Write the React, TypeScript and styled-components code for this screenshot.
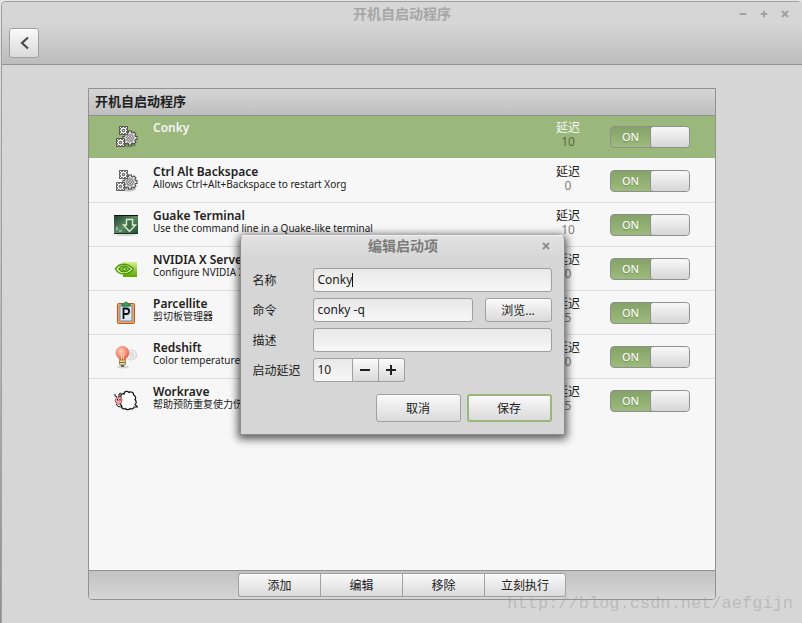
import React from "react";
import styled, { createGlobalStyle, css } from "styled-components";

const Global = createGlobalStyle`
  *, *::before, *::after { box-sizing: border-box; }
  body {
    margin: 0;
    background: linear-gradient(to bottom, #e4e4e4, #8a8f96);
    color: #212121;
    font: 12px "Noto Sans", "Noto Sans CJK SC", sans-serif;
  }
  button, input { font: inherit; color: inherit; }
`;

const Window = styled.div`
  position: relative;
  display: flex;
  flex-direction: column;
  min-height: calc(100vh - 1px);
  margin: 1px 0 0 1px;
  border: solid #9fa1a0;
  border-width: 1px 0 0 1px;
  border-radius: 5px 5px 0 0;
  background: #d6d6d6;
`;

const Header = styled.header`
  height: 63px;
  border-bottom: 1px solid #919191;
  border-radius: 4px 4px 0 0;
  background: linear-gradient(to bottom, #d6d6d6 22px, #bcbcbc);
`;

const TitleBar = styled.div`
  display: grid;
  grid-template-columns: 1fr auto 1fr;
  align-items: center;
  height: 24px;
  padding: 0 9px;
`;

const WindowTitle = styled.h1`
  grid-column: 2;
  margin: 0;
  font-size: 14px;
  line-height: 22px;
  font-weight: 700;
  color: #a6a6a6;
`;

const WindowControls = styled.div`
  display: flex;
  justify-content: flex-end;
  gap: 5px;
`;

const GlyphButton = styled.button`
  display: grid;
  place-items: center;
  width: 16px;
  height: 20px;
  padding: 0;
  border: 0;
  background: none;
  color: #a2a2a2;
`;

const raised = css`
  border: 1px solid #a0a0a0;
  border-radius: 3px;
  background: linear-gradient(to bottom, #fafafa, #dadada);
  box-shadow: inset 0 1px 0 #fff;
`;

const BackButton = styled.button`
  ${raised}
  display: grid;
  place-items: center;
  width: 30px;
  height: 30px;
  margin: 2px 0 0 7px;
  padding: 0;
  color: #4a4a4a;
`;

const Content = styled.main`
  display: flex;
  flex: 1;
  flex-direction: column;
  padding: 23px 86px 23px;
`;

const Panel = styled.section`
  display: flex;
  flex: 1;
  flex-direction: column;
  border: 1px solid #919191;
  border-radius: 0 0 4px 4px;
  background: #f7f7f7;
`;

const PanelTitle = styled.h2`
  height: 26px;
  margin: 0;
  padding: 0 6px;
  background: linear-gradient(to bottom, #d6d6d6, #bebebe);
  font-size: 13px;
  line-height: 25px;
  font-weight: 700;
`;

const List = styled.ul`
  flex: 1;
  margin: 0;
  padding: 0;
  list-style: none;
`;

const Row = styled.li<{ $selected?: boolean }>`
  display: grid;
  grid-template-columns: 24px 1fr 40px 102px;
  height: 44px;
  padding: 0 25px;
  border-bottom: 1px solid ${(p) => (p.$selected ? "#f7f7f7" : "#dedede")};
  background: ${(p) => (p.$selected ? "#9bb87c" : "#f7f7f7")};
  color: ${(p) => (p.$selected ? "#f5f5f5" : "#212121")};
  box-shadow: ${(p) => (p.$selected ? "inset 0 1px 0 #919191" : "none")};
  &:last-child { border-bottom: 0; }
`;

const IconCell = styled.span`
  display: grid;
  align-items: center;
`;

const TextCell = styled.div`
  padding: 6px 0 0 15px;
  white-space: nowrap;
`;

const Name = styled.div`
  font-size: 12px;
  line-height: 14px;
  font-weight: 600;
`;

const Description = styled.div`
  font-size: 10px;
  line-height: 11px;
`;

const Delay = styled.div`
  padding-top: 6px;
  line-height: 14px;
  text-align: center;
`;

const DelayValue = styled.div<{ $selected?: boolean }>`
  color: ${(p) => (p.$selected ? "#56693f" : "#7d7d7d")};
`;

const Switch = styled.label`
  display: flex;
  align-self: center;
  justify-self: end;
  width: 80px;
  height: 22px;
  border: 1px solid #8f8f8f;
  border-radius: 4px;
  background: linear-gradient(to bottom, #85a366, #9dbb7d);
`;

const SwitchInput = styled.input`
  position: absolute;
  opacity: 0;
  pointer-events: none;
`;

const SwitchText = styled.span`
  flex: 1;
  color: #f7f7f7;
  font-size: 11px;
  font-weight: 500;
  line-height: 19px;
  text-align: center;
  text-shadow: 0 1px 1px #6f8b53;
`;

const Knob = styled.span`
  width: 39px;
  border-left: 1px solid #8f8f8f;
  border-radius: 3px;
  background: linear-gradient(to bottom, #f8f8f8, #d6d6d6);
`;

const PanelFooter = styled.footer`
  display: flex;
  justify-content: center;
  height: 29px;
  padding: 2px 0;
  border-top: 1px solid #919191;
  border-radius: 0 0 3px 3px;
  background: linear-gradient(to bottom, #c2c2c2, #d6d6d6);
`;

const FooterButton = styled.button`
  ${raised}
  width: 82px;
  padding: 0;
  border-right-width: 0;
  border-radius: 0;
  &:first-child { border-radius: 3px 0 0 3px; }
  &:last-child { border-right-width: 1px; border-radius: 0 3px 3px 0; }
`;

const Overlay = styled.div`
  position: absolute;
  inset: 0;
  display: grid;
  place-items: center;
  padding-top: 44px;
`;

const Dialog = styled.form`
  width: 325px;
  padding: 0 12px 12px;
  border: 1px solid #8c8c8c;
  border-top-color: #f2f2f2;
  border-radius: 5px 5px 0 0;
  background: linear-gradient(to bottom, #e2e2e2, #d6d6d6 24px);
  box-shadow: 0 2px 9px 2px rgba(0, 0, 0, 0.65);
`;

const DialogBar = styled.div`
  display: grid;
  grid-template-columns: 1fr auto 1fr;
  align-items: center;
  height: 20px;
  margin-right: -2px;
  margin-bottom: 12px;
`;

const DialogTitle = styled.h2`
  grid-column: 2;
  margin: 0;
  font-size: 14px;
  line-height: 20px;
  font-weight: 700;
  color: #7a7a7a;
`;

const DialogClose = styled(GlyphButton)`
  justify-self: end;
  color: #919191;
`;

const Fields = styled.div`
  display: grid;
  grid-template-columns: 60px minmax(0, 1fr);
  row-gap: 6px;
  align-items: center;
`;

const FieldLine = styled.div<{ $gap?: number }>`
  display: flex;
  gap: ${(p) => p.$gap ?? 0}px;
`;

const TextInput = styled.input`
  flex: 1;
  min-width: 0;
  height: 24px;
  padding: 0 4px;
  border: 1px solid #a0a0a0;
  border-radius: 3px;
  outline: 0;
  background: linear-gradient(to bottom, #e8e8e8, #f7f7f7);
`;

const ActiveInput = styled(TextInput)`
  caret-color: transparent;
  background:
    linear-gradient(#111, #111) 38px 4px / 1px 14px no-repeat,
    linear-gradient(to bottom, #e8e8e8, #f7f7f7);
`;

const SpinInput = styled(TextInput)`
  flex: 0 0 40px;
  border-radius: 3px 0 0 3px;
`;

const SpinButton = styled.button`
  ${raised}
  display: grid;
  place-items: center;
  width: 26px;
  height: 24px;
  padding: 0;
  border-left: 0;
  border-radius: 0;
  &:last-child { border-radius: 0 3px 3px 0; }
`;

const BrowseButton = styled.button`
  ${raised}
  width: 67px;
  height: 24px;
  padding: 0;
`;

const Actions = styled.div`
  display: flex;
  justify-content: flex-end;
  gap: 6px;
  margin-top: 12px;
`;

const ActionButton = styled.button<{ $primary?: boolean }>`
  ${raised}
  width: 85px;
  height: 28px;
  padding: 0;
  ${(p) => p.$primary && css`border: 2px solid #9bb87c;`}
`;

const Watermark = styled.div`
  position: absolute;
  right: 9px;
  bottom: 9px;
  color: rgba(150, 150, 150, 0.45);
  font: 17px/20px "Liberation Mono", monospace;
  pointer-events: none;
`;

const Cross = () => (
  <svg width="8" height="8" viewBox="0 0 8 8" stroke="currentColor" strokeWidth="2">
    <path d="M1 1L7 7M7 1L1 7" />
  </svg>
);

const Plus = ({ size, weight = 2 }: { size: number; weight?: number }) => (
  <svg width={size} height={size} viewBox="0 0 12 12" stroke="currentColor" strokeWidth={weight}>
    <path d="M1 6H11M6 1V11" />
  </svg>
);

const Minus = ({ size, weight = 2 }: { size: number; weight?: number }) => (
  <svg width={size} height={size} viewBox="0 0 12 12" stroke="currentColor" strokeWidth={weight}>
    <path d="M1 6H11" />
  </svg>
);

const SmallCog = ({ x, y }: { x: number; y: number }) => (
  <g transform={`translate(${x} ${y})`}>
    <path
      d="M0.500 0.500H2.500V1.500H3.500V0.500H5.500V1.500H6.500V0.500H8.500V2.500H7.500V3.500H8.500V5.500H7.500V6.500H8.500V8.500H6.500V7.500H5.500V8.500H3.500V7.500H2.500V8.500H0.500V6.500H1.500V5.500H0.500V3.500H1.500V2.500H0.500Z"
      fill="#fff"
      stroke="#3c3c3c"
      strokeWidth=".9"
    />
    <circle cx="4.500" cy="4.500" r="1.300" fill="#bbb" stroke="#333" strokeWidth=".8" />
  </g>
);

const Gears = () => (
  <svg width="24" height="24" viewBox="0 0 24 24" fill="none">
    <ellipse cx="14" cy="20" rx="8" ry="2.500" fill="#000" opacity=".22" />
    <g stroke="#3c3c3c" strokeWidth="4">
      {[0, 45, 90, 135].map((a) => (
        <path key={a} d="M16 5.500V20.500" transform={`rotate(${a} 16 13)`} />
      ))}
    </g>
    <circle cx="16" cy="13" r="5.600" fill="#d5d5d5" stroke="#4a4a4a" />
    <g stroke="#dedede" strokeWidth="2.200">
      {[0, 45, 90, 135].map((a) => (
        <path key={a} d="M16 6.400V19.600" transform={`rotate(${a} 16 13)`} />
      ))}
    </g>
    <circle cx="16" cy="13" r="4.600" fill="#d0d0d0" />
    <circle cx="16" cy="13" r="3.300" fill="#e4e4e4" stroke="#6d6d6d" />
    <circle cx="16" cy="13" r="1.400" fill="#fff" stroke="#444" strokeWidth=".8" />
    <SmallCog x={5} y={1} />
    <SmallCog x={2} y={13} />
  </svg>
);

const Guake = () => (
  <svg width="24" height="24" viewBox="0 0 24 24">
    <defs>
      <linearGradient id="guake" x1="0" y1="0" x2="1" y2="1">
        <stop offset="0" stopColor="#1d3b2a" />
        <stop offset=".5" stopColor="#5a8a66" />
        <stop offset="1" stopColor="#1f4a31" />
      </linearGradient>
    </defs>
    <ellipse cx="12" cy="22" rx="10" ry="1" fill="#000" opacity=".15" />
    <rect y="2" width="24" height="19" fill="url(#guake)" />
    <path d="M0 2.500H24" stroke="#111" />
    <path d="M0 20.500H24" stroke="#16301f" />
    <path d="M12.500 6.500H18.500V12H21.500L15.500 18.500L9.500 12H12.500Z" fill="#3e6b49" stroke="#d9ecc6" strokeWidth="1.400" />
    <path d="M2 14L4 15.500L2 17M5 18H8" stroke="#cfe2c4" fill="none" />
  </svg>
);

const Nvidia = () => (
  <svg width="24" height="24" viewBox="0 0 24 24">
    <defs>
      <linearGradient id="nvidia" x1="0" y1="0" x2="0" y2="1">
        <stop offset="0" stopColor="#d5f08c" />
        <stop offset="1" stopColor="#5aa800" />
      </linearGradient>
    </defs>
    <rect x="9" y="5" width="14" height="15" fill="url(#nvidia)" />
    <g fill="none" stroke="#4f9a06" strokeWidth="1.500">
      <path d="M1.500 12C5 6 13 5.500 19.500 12C14 19 5 18.500 1.500 12Z" fill="#e3f3bf" />
      <path d="M5 12C7.500 8 12 8 16 12C12 16 7.500 15.500 5 12Z" />
      <path d="M8 12C9 10.300 12 10.500 13 12.500C11 14 9 13.800 8 12Z" />
    </g>
  </svg>
);

const Clipboard = () => (
  <svg width="24" height="24" viewBox="0 0 24 24">
    <rect x="3.500" y="2.500" width="17" height="20" rx="1" fill="#f1a558" stroke="#c4571c" />
    <rect x="6" y="5" width="12" height="15" fill="#dce8f4" stroke="#6c8db5" />
    <path d="M8 5V3H10C10 0.500 14 0.500 14 3H16V5Z" fill="#37a65a" stroke="#1e7c40" />
    <path d="M9.500 18V7.500H12.500C16 7.500 16 13 12.500 13H9.500" fill="none" stroke="#111" strokeWidth="1.800" />
  </svg>
);

const Bulb = () => (
  <svg width="24" height="24" viewBox="0 0 24 24">
    <defs>
      <radialGradient id="bulb" cx=".4" cy=".35" r=".7">
        <stop offset="0" stopColor="#ffd3c3" />
        <stop offset=".6" stopColor="#f58a70" />
        <stop offset="1" stopColor="#df4e3a" />
      </radialGradient>
    </defs>
    <ellipse cx="9" cy="22" rx="6" ry="1.500" fill="#000" opacity=".15" />
    <circle cx="17.500" cy="10" r="5" fill="#eee" stroke="#cfcfcf" />
    <path d="M15 8H20M15 10H20M16 12H20" stroke="#c9c9c9" strokeWidth=".7" />
    <path d="M8.500 1.500C4.500 1.500 2 4.500 2 8C2 11.500 5 12.500 5.500 15H11.500C12 12.500 15 11.500 15 8C15 4.500 12.500 1.500 8.500 1.500Z" fill="url(#bulb)" stroke="#ea7861" strokeWidth=".6" />
    <path d="M6 9L8.500 11L11 9M7.500 11V15M9.500 11V15" fill="none" stroke="#ffe3b5" strokeWidth=".8" />
    <rect x="5.500" y="15" width="6" height="5" rx="1" fill="#e9d98e" stroke="#7c7245" strokeWidth=".8" />
    <path d="M5.500 17.500H11.500" stroke="#7c7245" />
    <path d="M7 21H10" stroke="#444" strokeWidth="1.500" />
  </svg>
);

const Sheep = () => (
  <svg width="24" height="24" viewBox="0 0 24 24">
    <path
      d="M7 9C6 6 8 4 10 5C10 2 14 1.500 15 3.500C17 2 20 3.500 19.500 6C22 7 22 9.500 21 10.500C23 12.500 22 15 21 15.500L23.500 18H20C20 19.500 18 20.500 16.500 19.500C15 21 12 21 11.500 19.500C9 20.500 7.500 19 8 17.500L6.500 15Z"
      fill="#fff"
      stroke="#111"
      strokeWidth="1.200"
    />
    <path d="M2.500 8.500L6 7.500L8 10L7.500 13.500L5 15.500L2 14L1 11.500Z" fill="#f3a3aa" stroke="#a04a56" strokeWidth=".8" />
    <path d="M1 5V7L3 8M7 4L5 5V8M3.500 10V11.500M6 10V11.500M2 15L4 17.500L8 18" fill="none" stroke="#111" />
  </svg>
);

interface Program {
  name: string;
  description?: string;
  delay: number;
  icon: React.ComponentType;
}

const programs: Program[] = [
  { name: "Conky", delay: 10, icon: Gears },
  { name: "Ctrl Alt Backspace", description: "Allows Ctrl+Alt+Backspace to restart Xorg", delay: 0, icon: Gears },
  { name: "Guake Terminal", description: "Use the command line in a Quake-like terminal", delay: 10, icon: Guake },
  { name: "NVIDIA X Server Settings", description: "Configure NVIDIA X Server Settings", delay: 0, icon: Nvidia },
  { name: "Parcellite", description: "剪切板管理器", delay: 5, icon: Clipboard },
  { name: "Redshift", description: "Color temperature adjustment tool", delay: 0, icon: Bulb },
  { name: "Workrave", description: "帮助预防重复使力伤害", delay: 5, icon: Sheep },
];

const ProgramRow = ({ program, selected }: { program: Program; selected: boolean }) => {
  const Icon = program.icon;
  return (
    <Row $selected={selected}>
      <IconCell><Icon /></IconCell>
      <TextCell>
        <Name>{program.name}</Name>
        {program.description && <Description>{program.description}</Description>}
      </TextCell>
      <Delay>
        延迟
        <DelayValue $selected={selected}>{program.delay}</DelayValue>
      </Delay>
      <Switch>
        <SwitchInput type="checkbox" role="switch" aria-label={program.name} defaultChecked />
        <SwitchText>ON</SwitchText>
        <Knob />
      </Switch>
    </Row>
  );
};

const EditDialog = () => (
  <Overlay>
    <Dialog role="dialog" aria-labelledby="edit-title" onSubmit={(e) => e.preventDefault()}>
      <DialogBar>
        <DialogTitle id="edit-title">编辑启动项</DialogTitle>
        <DialogClose type="button" aria-label="关闭"><Cross /></DialogClose>
      </DialogBar>
      <Fields>
        <label htmlFor="name">名称</label>
        <FieldLine><ActiveInput id="name" defaultValue="Conky" /></FieldLine>
        <label htmlFor="command">命令</label>
        <FieldLine $gap={12}>
          <TextInput id="command" defaultValue="conky -q" />
          <BrowseButton type="button">浏览...</BrowseButton>
        </FieldLine>
        <label htmlFor="description">描述</label>
        <FieldLine><TextInput id="description" /></FieldLine>
        <label htmlFor="delay">启动延迟</label>
        <FieldLine>
          <SpinInput id="delay" inputMode="numeric" defaultValue="10" />
          <SpinButton type="button" aria-label="减少"><Minus size={12} /></SpinButton>
          <SpinButton type="button" aria-label="增加"><Plus size={12} /></SpinButton>
        </FieldLine>
      </Fields>
      <Actions>
        <ActionButton type="button">取消</ActionButton>
        <ActionButton type="submit" $primary>保存</ActionButton>
      </Actions>
    </Dialog>
  </Overlay>
);

export default function App() {
  return (
    <>
      <Global />
      <Window>
        <Header>
          <TitleBar>
            <WindowTitle>开机自启动程序</WindowTitle>
            <WindowControls>
              <GlyphButton aria-label="最小化"><Minus size={8} weight={3} /></GlyphButton>
              <GlyphButton aria-label="最大化"><Plus size={8} weight={3} /></GlyphButton>
              <GlyphButton aria-label="关闭"><Cross /></GlyphButton>
            </WindowControls>
          </TitleBar>
          <BackButton aria-label="返回">
            <svg width="12" height="14" viewBox="0 0 12 14" fill="none" stroke="currentColor" strokeWidth="2.200">
              <path d="M10 1.500L4 7L10 12.500" />
            </svg>
          </BackButton>
        </Header>
        <Content>
          <Panel>
            <PanelTitle>开机自启动程序</PanelTitle>
            <List>
              {programs.map((program, index) => (
                <ProgramRow key={program.name} program={program} selected={index === 0} />
              ))}
            </List>
            <PanelFooter>
              {["添加", "编辑", "移除", "立刻执行"].map((label) => (
                <FooterButton key={label} type="button">{label}</FooterButton>
              ))}
            </PanelFooter>
          </Panel>
        </Content>
        <EditDialog />
        <Watermark>http://blog.csdn.net/aefgijn</Watermark>
      </Window>
    </>
  );
}
